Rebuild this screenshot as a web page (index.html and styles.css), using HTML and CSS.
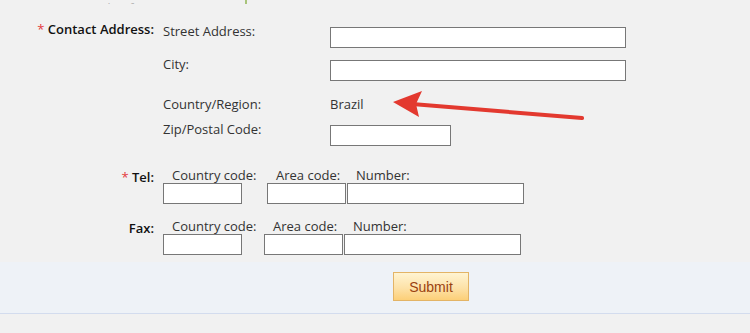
FILE: index.html
```html
<!DOCTYPE html>
<html lang="en">

<head>
    <meta charset="utf-8">
    <meta name="viewport" content="width=device-width, initial-scale=1.0">
    <title>Contact Information</title>
    <link rel="stylesheet" href="styles.css">
</head>

<body>
    <div class="page">
        <div class="cut-row">
            <span class="cut-label">Number for:</span>
            <span class="cut-mark"></span>
        </div>

        <div class="row address">
            <div class="row-label strong"><span class="req">*</span> Contact Address:</div>
            <div class="fields">
                <div class="field street">
                    <span class="sub-label">Street Address:</span>
                    <input type="text" class="text long">
                </div>
                <div class="field city">
                    <span class="sub-label">City:</span>
                    <input type="text" class="text long">
                </div>
                <div class="field country">
                    <span class="sub-label">Country/Region:</span>
                    <span class="value">Brazil</span>
                </div>
                <div class="field zip">
                    <span class="sub-label">Zip/Postal Code:</span>
                    <input type="text" class="text zip-code">
                </div>
            </div>
        </div>

        <div class="row phone tel">
            <div class="row-label strong"><span class="req">*</span> Tel:</div>
            <div class="cols">
                <div class="col first">
                    <span class="col-label">Country code:</span>
                    <input type="text" class="text short">
                </div>
                <div class="col second">
                    <span class="col-label">Area code:</span>
                    <input type="text" class="text short">
                </div>
                <div class="col">
                    <span class="col-label">Number:</span>
                    <input type="text" class="text number">
                </div>
            </div>
        </div>

        <div class="row phone fax">
            <div class="row-label strong">Fax:</div>
            <div class="cols">
                <div class="col first">
                    <span class="col-label">Country code:</span>
                    <input type="text" class="text short">
                </div>
                <div class="col second">
                    <span class="col-label">Area code:</span>
                    <input type="text" class="text short">
                </div>
                <div class="col">
                    <span class="col-label">Number:</span>
                    <input type="text" class="text number">
                </div>
            </div>
        </div>

        <div class="actions">
            <button type="button" class="submit">Submit</button>
        </div>

        <!-- annotation pointing at the country value -->
        <svg class="arrow" width="200" height="36" viewBox="0 0 200 36">
            <line x1="24" y1="18" x2="194" y2="32" stroke="#e3392f" stroke-width="4" stroke-linecap="round" />
            <polygon points="5,16 34,5 28,18 31,31" fill="#e3392f" />
        </svg>
    </div>
</body>

</html>
```

FILE: styles.css
```css
* {
    margin: 0;
    padding: 0;
    box-sizing: border-box;
}

body {
    background: #f1f1f1;
    font-family: "Open Sans", "DejaVu Sans", sans-serif;
    font-size: 13px;
    line-height: 16px;
    color: #333;
}

.page {
    position: relative;
    width: 750px;
    height: 333px;
    overflow: hidden;
}

.cut-row {
    height: 4px;
    overflow: hidden;
    display: flex;
    align-items: flex-end;
}

.cut-label {
    display: block;
    margin-left: 80px;
    margin-bottom: -13px;
    color: #b5b5b5;
    font-size: 12px;
}

.cut-mark {
    display: block;
    width: 2px;
    height: 5px;
    margin-left: 96px;
    background: #a8c47a;
}

.row {
    display: flex;
}

.row-label {
    width: 154px;
    flex-shrink: 0;
    margin-right: 9px;
    text-align: right;
}

.strong {
    font-weight: 600;
    color: #111;
}

.req {
    color: #e4393c;
    font-weight: 400;
}

.address {
    margin-top: 19px;
}

.address .row-label {
    margin-top: -2px;
}

.fields {
    display: flex;
    flex-direction: column;
}

.field {
    display: flex;
    align-items: flex-start;
}

.sub-label {
    width: 167px;
    flex-shrink: 0;
}

.field .text {
    margin-top: 4px;
}

.city {
    margin-top: 8px;
}

.country {
    margin-top: 15px;
}

.zip {
    margin-top: 9px;
}

.text {
    display: block;
    height: 21px;
    border: 1px solid #777;
    background: #fff;
    font-size: 13px;
}

.long {
    width: 296px;
}

.zip-code {
    width: 121px;
}

.short {
    width: 79px;
}

.number {
    width: 177px;
}

.tel {
    margin-top: 21px;
}

.fax {
    margin-top: 14px;
}

.phone .row-label {
    padding-top: 2px;
}

.cols {
    display: flex;
}

.col {
    display: flex;
    flex-direction: column;
}

.col-label {
    padding-left: 9px;
}

.tel .first {
    width: 104px;
}

.fax .first {
    width: 101px;
}

.second {
    width: 80px;
}

.actions {
    margin-top: 7px;
    height: 52px;
    background: #eef2f7;
    border-bottom: 1px solid #d3dcee;
    padding: 10px 0 0 393px;
}

.submit {
    display: block;
    width: 76px;
    height: 29px;
    border: 1px solid #e3b466;
    background: linear-gradient(#fff4d2, #fde2a8 55%, #fccf78);
    font-family: "Liberation Sans", Arial, sans-serif;
    font-size: 14px;
    color: #9a4210;
    cursor: pointer;
}

.arrow {
    position: absolute;
    left: 388px;
    top: 86px;
    pointer-events: none;
}
```
